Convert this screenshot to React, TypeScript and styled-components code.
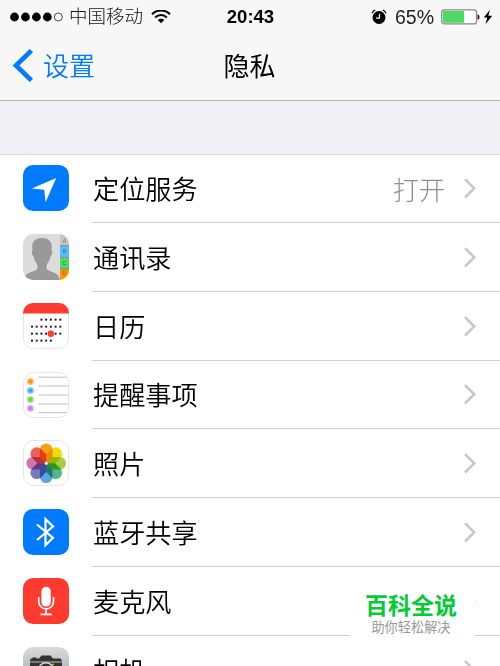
import { ReactNode } from 'react';
import styled, { createGlobalStyle } from 'styled-components';

interface SettingProps {
  label: string
  icon: ReactNode
  value?: string
}

const petals = ['#f9a01b', '#f0dc00', '#a5cf3c', '#4fb98a', '#62a5dd', '#7d78bd', '#cb79ac', '#f0605a']

const LocationIcon = () => (
  <svg viewBox="0 0 46 46">
    <rect width="46" height="46" rx="10" fill="#007aff" />
    <path d="M33.2 13 8.8 23.6l12.4 1.1 1.4 12.6z" fill="#fff" />
  </svg>
)

const ContactsIcon = () => (
  <svg viewBox="0 0 46 46">
    <clipPath id="contacts"><rect width="46" height="46" rx="10" /></clipPath>
    <g clipPath="url(#contacts)">
      <rect width="46" height="46" fill="#dcdcdc" />
      <path d="M1 46c1-7 5-7 10-9 4-1 4-3 3-7-2-2-3-5-3.500-8-2-1-2-5-1-6C8 8 12 4 19 4s11 4 9.500 12c1 1 1 5-1 6-.5 3-1.500 6-3.500 8-1 4-1 6 3 7 5 2 8 2 10 9z" fill="#999" />
      <rect x="37" width="9" height="12" fill="#c9c5bd" />
      <rect x="37" y="11.500" width="9" height="12" fill="#55bef8" />
      <rect x="37" y="23.500" width="9" height="12" fill="#4cd964" />
      <rect x="37" y="35" width="9" height="11" fill="#ff9500" />
      <path d="M37 11.500h9M37 23.500h9M37 35h9" stroke="#777" strokeWidth=".6" />
      <g fill="#000" fillOpacity=".45" fontSize="5" fontFamily="Liberation Sans, sans-serif" textAnchor="middle">
        <text x="41.300" y="9">A</text>
        <text x="41.300" y="19">B</text>
        <text x="41.300" y="31">C</text>
        <text x="41.300" y="41">D</text>
      </g>
    </g>
  </svg>
)

const days = [[4, 5, 6, 7, 8], [2, 3, 4, 5, 6, 7, 8], [2, 3, 4, 5, 6, 7, 8], [2, 3, 4, 5, 6]]

const CalendarIcon = () => (
  <svg viewBox="0 0 46 46">
    <rect x=".5" y=".5" width="45" height="45" rx="10" fill="#fff" stroke="#e6e6e6" />
    <path d="M0 10.500V10A10 10 0 0 1 10 0h26a10 10 0 0 1 10 10v.5z" fill="#ff3b30" />
    {days.map((week, row) => week.map(day => (
      <rect key={`${row}-${day}`} x={day * 4.72 - 1.4} y={15.700 + row * 7} width="1.900" height="1.900" fill="#111" />
    )))}
    <circle cx="27.800" cy="30.700" r="3.200" fill="#ff3b30" />
  </svg>
)

const RemindersIcon = () => (
  <svg viewBox="0 0 46 46">
    <rect x=".5" y=".5" width="45" height="45" rx="10" fill="#fff" stroke="#e6e6e6" />
    <path d="M15.300 5.200h28M15.300 14h30M15.300 23h30M15.300 32h30M15.300 40.700h28" stroke="#bfbfbf" />
    {['#ff9500', '#34aafa', '#66d93f', '#cd7be6'].map((color, index) => (
      <g key={color} fill={color}>
        <circle cx="7.400" cy={9.600 + index * 8.900} r="3.500" fillOpacity=".6" />
        <circle cx="7.400" cy={9.600 + index * 8.900} r="2" />
      </g>
    ))}
  </svg>
)

const PhotosIcon = () => (
  <svg viewBox="0 0 46 46">
    <rect x=".5" y=".5" width="45" height="45" rx="10" fill="#fff" stroke="#e6e6e6" />
    <g style={{ isolation: 'isolate' }}>
      {petals.map((color, index) => (
        <path key={color} d="M23.200 23.200l-6.300-6.300V9.700a6.300 6.300 0 0 1 12.600 0v7.200z" fill={color}
          transform={`rotate(${index * 45} 23.200 23.200)`} style={{ mixBlendMode: 'multiply' }} />
      ))}
    </g>
    <circle cx="23.200" cy="23.200" r="1.500" fill="#fff" />
  </svg>
)

const BluetoothIcon = () => (
  <svg viewBox="0 0 46 46">
    <rect width="46" height="46" rx="10" fill="#007aff" />
    <path d="m14 15.500 16 13.300-7.500 7.400V10.200l7.500 7.300L14 31" fill="none" stroke="#fff" strokeWidth="2.200" />
  </svg>
)

const MicrophoneIcon = () => (
  <svg viewBox="0 0 46 46">
    <rect width="46" height="46" rx="10" fill="#ff3b30" />
    <rect x="18.400" y="8.800" width="9.400" height="19.800" rx="4.700" fill="#fff" />
    <path d="M15.700 19v4.500a7.400 7.400 0 0 0 14.800 0V19M23.100 31v5M17.500 36.300h11.300" fill="none" stroke="#fff" strokeWidth="1.700" />
  </svg>
)

const CameraIcon = () => (
  <svg viewBox="0 0 46 46">
    <linearGradient id="camera" x2="0" y2="1">
      <stop stopColor="#dadbdd" />
      <stop offset="1" stopColor="#929599" />
    </linearGradient>
    <rect width="46" height="46" rx="10" fill="url(#camera)" />
    <path d="M7.500 13v-1.500h2V10.500h4v1h2.500l2.500-3h9l2.500 3H38V13h1v1.500H7V13zM7 15.500h32V35H7z" fill="#333" />
    <circle cx="23" cy="23" r="7.300" fill="#333" stroke="#d5d6d8" strokeWidth="1.500" />
    <circle cx="30" cy="17.300" r=".9" fill="#ffcc00" />
  </svg>
)

const Chevron = () => (
  <svg width="14" height="22" viewBox="0 0 14 22">
    <path d="m2 2.100 9.200 9.200L2 20.500" fill="none" stroke="#c7c7cc" strokeWidth="2.600" />
  </svg>
)

const settings: SettingProps[] = [
  { label: '定位服务', icon: <LocationIcon />, value: '打开' },
  { label: '通讯录', icon: <ContactsIcon /> },
  { label: '日历', icon: <CalendarIcon /> },
  { label: '提醒事项', icon: <RemindersIcon /> },
  { label: '照片', icon: <PhotosIcon /> },
  { label: '蓝牙共享', icon: <BluetoothIcon /> },
  { label: '麦克风', icon: <MicrophoneIcon /> },
  { label: '相机', icon: <CameraIcon /> },
]

const SettingRow = ({ label, icon, value }: SettingProps) => (
  <Row>
    <IconBox>{icon}</IconBox>
    <RowBody>
      <Label>{label}</Label>
      {value && <Value>{value}</Value>}
      <Chevron />
    </RowBody>
  </Row>
)

export default function App() {
  return <Screen>
    <GlobalStyle />
    <StatusBar>
      <Carrier>
        <svg width="54" height="12" viewBox="0 0 54 12">
          {[0, 1, 2, 3].map(i => <circle key={i} cx={4.500 + i * 10.950} cy="6" r="4.400" />)}
          <circle cx="48.300" cy="6" r="4" fill="none" stroke="#222" strokeWidth=".8" />
        </svg>
        <CarrierName>中国移动</CarrierName>
        <svg width="20" height="14" viewBox="0 0 20 14">
          <path d="M1 4.200a12.800 12.800 0 0 1 18 0M4.200 7.500a8.200 8.200 0 0 1 11.600 0" fill="none" stroke="#000" strokeWidth="2" />
          <path d="M6.700 10a4.700 4.700 0 0 1 6.600 0L10 13.300z" />
        </svg>
      </Carrier>
      <Clock>20:43</Clock>
      <Power>
        <svg width="16" height="16" viewBox="0 0 16 16">
          <circle cx="8" cy="8.500" r="6.500" />
          <path d="M1 4.200Q2 2 4.200 1.100M15 4.200Q14 2 11.800 1.100" fill="none" stroke="#000" strokeWidth="1.200" />
          <path d="M8.500 4.800v4.400H5" fill="none" stroke="#f7f7f7" strokeWidth="1.200" />
        </svg>
        <Percent>65%</Percent>
        <svg width="39" height="16" viewBox="0 0 39 16">
          <rect x=".7" y=".9" width="34.800" height="14" rx="2.500" fill="#fff" stroke="#888" strokeWidth="1.200" />
          <rect x="1.800" y="2" width="21.400" height="11.800" rx="1" fill="#4cd964" />
          <path d="M36.500 5.500h.5a1.500 2.500 0 0 1 0 5h-.5z" fill="#222" />
        </svg>
        <Bolt width="10" height="16" viewBox="0 0 10 16">
          <path d="M7 .8.800 8.600h3.500L2.500 15.200 9.200 6.700H5.300z" />
        </Bolt>
      </Power>
    </StatusBar>
    <NavBar>
      <Back>
        <svg width="22" height="33" viewBox="0 0 22 33">
          <path d="M20.400 1.600 5 16.500l15.400 14.900" fill="none" stroke="#007aff" strokeWidth="4.700" />
        </svg>
        <span>设置</span>
      </Back>
      <Title>隐私</Title>
    </NavBar>
    <Spacer />
    <List>
      {settings.map(item => <SettingRow key={item.label} {...item} />)}
    </List>
    <Watermark>
      <Brand>百科全说</Brand>
      <Slogan>助你轻松解决</Slogan>
    </Watermark>
  </Screen>
}

const GlobalStyle = createGlobalStyle`
  body {
    margin: 0;
    overflow: hidden;
  }
  svg {
    display: block;
    flex: none;
  }
`

const Screen = styled.div`
  position: relative;
  display: flex;
  flex-direction: column;
  width: 500px;
  height: 666px;
  overflow: hidden;
  background: #fff;
  color: #000;
  font-family: 'Liberation Sans', 'Noto Sans CJK SC', sans-serif;
`

const StatusBar = styled.div`
  display: grid;
  grid-template-columns: 1fr auto 1fr;
  align-items: center;
  flex: none;
  height: 32px;
  padding: 0 7px 0 10px;
  background: #f7f7f7;
  font-size: 18.5px;
  line-height: 32px;
`

const Carrier = styled.div`
  display: flex;
  align-items: center;
  gap: 6px;
  font-weight: 300;
`

const CarrierName = styled.span`
  height: 32px;
  padding-top: 1px;
  margin: 0 2px 0 -1px;
  color: #111;
`

const Clock = styled.div`
  margin-left: -2px;
  font-weight: 700;
  font-size: 18.5px;
`

const Power = styled.div`
  display: flex;
  align-items: center;
  justify-content: flex-end;
`

const Percent = styled.span`
  margin: 0 7px 0 8px;
  font-size: 19.5px;
  color: #222;
`

const Bolt = styled.svg`
  margin-left: 3px;
`

const NavBar = styled.div`
  display: grid;
  grid-template-columns: 1fr auto 1fr;
  align-items: center;
  flex: none;
  box-sizing: border-box;
  height: 69px;
  padding: 0 12px 1px 11px;
  background: #f7f7f7;
  border-bottom: 1px solid #b2b2b2;
  font-size: 26px;
  line-height: 40px;
`

const Back = styled.div`
  display: flex;
  align-items: center;
  gap: 10px;
  color: #007aff;
  font-weight: 350;

  span {
    padding-top: 2px;
  }
`

const Title = styled.div`
  padding-top: 2px;
  font-weight: 400;
`

const Spacer = styled.div`
  flex: none;
  box-sizing: border-box;
  height: 53.3px;
  background: #efeff4;
`

const List = styled.div`
  flex: none;
  box-shadow: inset 0 1px #d9d9dc;
`

const Row = styled.div`
  display: flex;
  height: 68.77px;
  padding-left: 23px;
`

const IconBox = styled.div`
  width: 46px;
  height: 46px;
  margin: 11px 23px 0 0;

  svg {
    width: 46px;
    height: 46px;
  }
`

const RowBody = styled.div`
  display: flex;
  align-items: center;
  flex: 1;
  box-sizing: border-box;
  padding-right: 23px;
  border-bottom: 1px solid #d0d0d3;
`

const Label = styled.span`
  flex: 1;
  padding: 4px 0 0 1px;
  font-size: 26.2px;
  font-weight: 350;
  line-height: 40px;
`

const Value = styled.span`
  margin-right: 18px;
  color: #8e8e93;
  font-size: 26px;
  font-weight: 300;
`

const Watermark = styled.div`
  position: absolute;
  left: 350px;
  top: 586px;
  display: flex;
  flex-direction: column;
  align-items: center;
  box-sizing: border-box;
  width: 125px;
  height: 68px;
  padding-right: 3px;
  background: #fff;
`

const Brand = styled.div`
  margin-top: 5px;
  color: #0c3;
  font-size: 23px;
  font-weight: 700;
  line-height: 31px;
`

const Slogan = styled.div`
  color: #999;
  font-size: 13.2px;
  line-height: 11px;
`
